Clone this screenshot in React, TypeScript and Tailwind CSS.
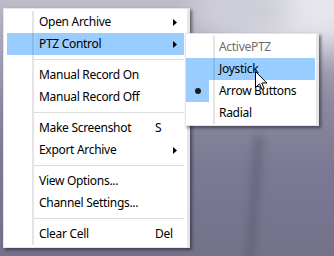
import React from "react";

const F = { fontFamily: '"Segoe UI", "Noto Sans", "Open Sans", sans-serif' };

function Arrow() {
  return (
    <svg width="4" height="7" viewBox="0 0 4 7" className="block">
      <path d="M0 0 L4 3.5 L0 7 Z" fill="#000" />
    </svg>
  );
}

function Row({
  label,
  hl,
  sub,
  shortcut,
}: {
  label: string;
  hl?: boolean;
  sub?: boolean;
  shortcut?: string;
}) {
  return (
    <div className={`relative flex h-[22px] items-center ${hl ? "bg-[#99ccff]" : ""}`}>
      <div className="w-[25px] shrink-0" />
      <div className={`h-full w-[2px] shrink-0 ${hl ? "bg-[#88bbe8]" : "bg-[#e4e4e4]"}`} />
      <div className={`h-full w-[1px] shrink-0 ${hl ? "bg-[#a6d3ff]" : "bg-white"}`} />
      <div className="min-w-0 flex-1 whitespace-nowrap pl-[4px] text-[12px] tracking-[-0.3px] text-black">
        {label}
      </div>
      <div className="w-[18px] shrink-0 whitespace-nowrap text-[12px] tracking-[-0.3px] text-black">
        {shortcut}
      </div>
      <div className="flex w-[11px] shrink-0 items-center">{sub ? <Arrow /> : null}</div>
    </div>
  );
}

function Sep() {
  return (
    <div className="flex h-[9px] items-center">
      <div className="w-[25px] shrink-0 self-stretch" />
      <div className="w-[2px] shrink-0 self-stretch bg-[#e4e4e4]" />
      <div className="h-[1px] flex-1 bg-[#dcdcdc]" />
    </div>
  );
}

function SubRow({
  label,
  hl,
  checked,
  disabled,
}: {
  label: string;
  hl?: boolean;
  checked?: boolean;
  disabled?: boolean;
}) {
  return (
    <div className={`flex h-[22px] items-center ${hl ? "bg-[#99ccff]" : ""}`}>
      <div
        className={`flex h-full w-[23px] shrink-0 items-center justify-center ${
          checked ? "bg-[#99ccff]" : ""
        }`}
      >
        {checked ? <div className="h-[6px] w-[6px] rounded-full bg-[#1a1a1a]" /> : null}
      </div>
      <div className="w-[4px] shrink-0" />
      <div className={`h-full w-[2px] shrink-0 ${hl ? "bg-[#88bbe8]" : "bg-[#e4e4e4]"}`} />
      <div
        className={`min-w-0 flex-1 whitespace-nowrap pl-[4px] text-[12px] tracking-[-0.3px] ${
          disabled ? "text-[#6d6d6d]" : "text-black"
        }`}
      >
        {label}
      </div>
    </div>
  );
}

export default function App() {
  return (
    <div
      className="relative h-[256px] w-[334px] overflow-hidden bg-[linear-gradient(180deg,#bdbcc8_0%,#a6a5b6_18%,#8c8aa1_40%,#7b7993_65%,#74728b_100%)]"
      style={F}
    >
      <div className="absolute right-[-40px] top-[-45px] h-[95px] w-[150px] rounded-full bg-[#ececf2] opacity-90 blur-[16px]" />
      <div className="absolute left-[190px] top-[-20px] h-[60px] w-[100px] rounded-full bg-[#cdcdd7] blur-[14px]" />
      <div className="absolute left-[250px] top-[135px] h-[140px] w-[8px] rotate-[4deg] rounded-full bg-[#5e5c74] opacity-70 blur-[4px]" />

      {/* main menu */}
      <div className="absolute left-[3px] top-[8px] w-[187px] border border-r-[3px] border-[#e6e6e6] bg-white pb-[2px] pl-[3px] pr-[3px] pt-[2px] shadow-[2px_2px_3px_rgba(30,30,40,0.6)]">
        <Row label="Open Archive" sub />
        <Row label="PTZ Control" sub hl />
        <Sep />
        <Row label="Manual Record On" />
        <Row label="Manual Record Off" />
        <Sep />
        <Row label="Make Screenshot" shortcut="S" />
        <Row label="Export Archive" sub />
        <Sep />
        <Row label="View Options..." />
        <Row label="Channel Settings..." />
        <Sep />
        <Row label="Clear Cell" shortcut="Del" />
      </div>

      {/* submenu */}
      <div className="absolute left-[185px] top-[33px] w-[134px] border border-r-[3px] border-[#e6e6e6] bg-white pb-[1px] pl-[0px] pr-[1px] pt-[2px] shadow-[2px_2px_3px_rgba(30,30,40,0.6)]">
        <SubRow label="ActivePTZ" disabled />
        <SubRow label="Joystick" hl />
        <SubRow label="Arrow Buttons" checked />
        <SubRow label="Radial" />
      </div>

      {/* cursor */}
      <svg
        className="absolute left-[255px] top-[71px]"
        width="13"
        height="20"
        viewBox="0 0 13 20"
      >
        <path
          d="M0.5 0.5 L0.5 16.5 L4.5 12.8 L7 18.5 L9.2 17.5 L6.8 12 L11.8 12 Z"
          fill="#fff"
          stroke="#000"
          strokeWidth="1"
          strokeLinejoin="miter"
        />
      </svg>
    </div>
  );
}
